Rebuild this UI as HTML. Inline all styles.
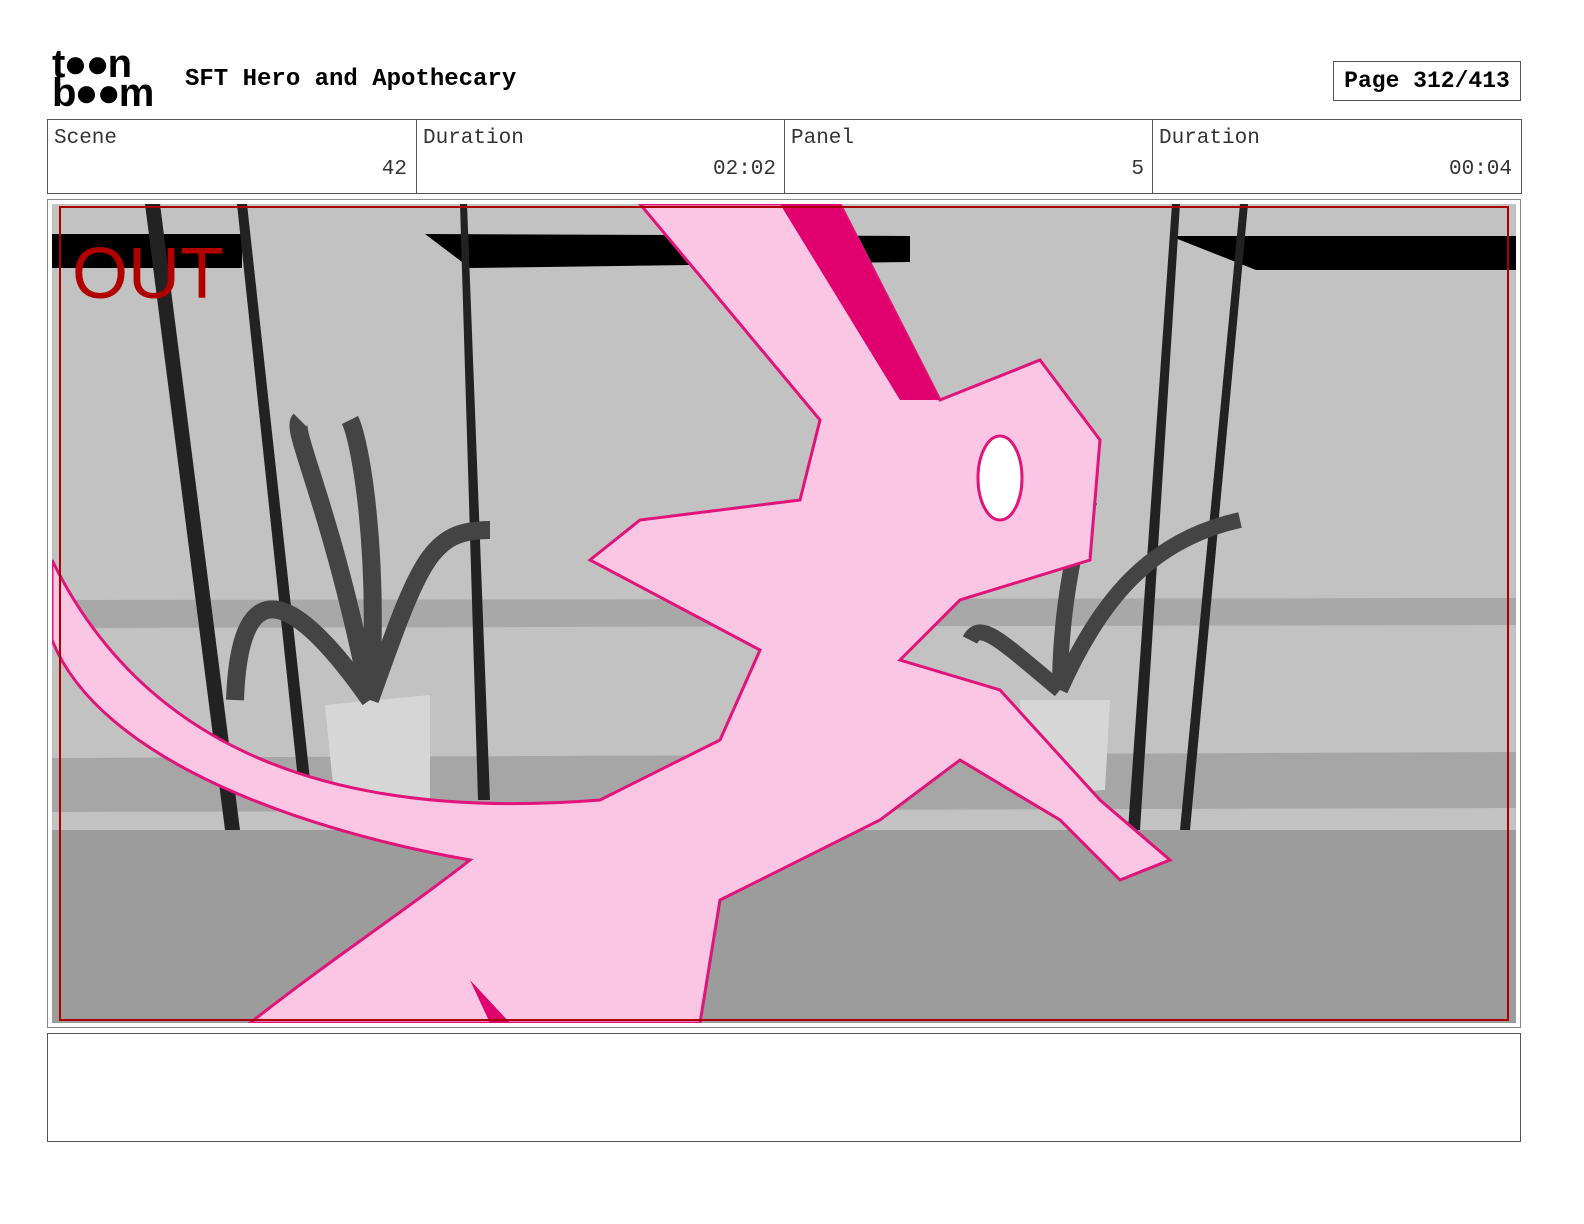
<!DOCTYPE html>
<html style="overflow:hidden"><head><style>
html,body{overflow:hidden}
body{margin:0;background:#fff;width:1584px;height:1224px;position:relative;font-family:"Liberation Mono",monospace}
.a{position:absolute}
.cell{position:absolute;top:120px;height:73px;border-left:1px solid #555;font-size:21px;color:#333}
.cell .l{position:absolute;left:6px;top:7px}
.cell .v{position:absolute;right:8px;top:38px}
</style></head><body>
<div class="a" style="left:52px;top:50px;font-family:'Liberation Sans',sans-serif;font-weight:bold;font-size:40px;line-height:29px;letter-spacing:-2px">t●●n<br>b●●m</div>
<div class="a" style="left:185px;top:66px;font-size:24px;font-weight:bold">SFT Hero and Apothecary</div>
<div class="a" style="left:1333px;top:61px;width:186px;height:38px;border:1px solid #555;font-size:23px;font-weight:bold;text-align:center;line-height:38px">Page 312/413</div>
<div class="a" style="left:47px;top:119px;width:1473px;height:73px;border:1px solid #555"></div>
<div class="cell" style="left:48px;width:367px;border-left:none"><span class="l">Scene</span><span class="v">42</span></div>
<div class="cell" style="left:416px;width:367px"><span class="l">Duration</span><span class="v">02:02</span></div>
<div class="cell" style="left:784px;width:367px"><span class="l">Panel</span><span class="v">5</span></div>
<div class="cell" style="left:1152px;width:367px"><span class="l">Duration</span><span class="v">00:04</span></div>
<div class="a" style="left:47px;top:199px;width:1472px;height:827px;border:1px solid #888"></div>
<svg class="a" style="left:52px;top:204px" width="1464" height="819" viewBox="52 204 1464 819">
<rect x="52" y="204" width="1464" height="819" fill="#c2c2c2"/>
<rect x="52" y="830" width="1464" height="193" fill="#9c9c9c"/>
<polygon points="52,600 1516,598 1516,625 52,628" fill="#a8a8a8"/>
<polygon points="52,758 1516,752 1516,808 52,812" fill="#a6a6a6"/>
<rect x="52" y="234" width="190" height="34" fill="#000"/>
<polygon points="425,234 910,236 910,262 470,268" fill="#000"/>
<polygon points="1170,236 1516,236 1516,270 1256,270" fill="#000"/>
<polygon points="145,204 160,204 240,830 225,830" fill="#222"/>
<polygon points="237,204 247,204 310,780 298,780" fill="#222"/>
<polygon points="460,204 467,204 490,800 478,800" fill="#222"/>
<polygon points="1172,204 1180,204 1140,830 1128,830" fill="#222"/>
<polygon points="1240,204 1248,204 1190,830 1180,830" fill="#222"/>
<polygon points="325,705 430,695 430,800 335,805" fill="#d6d6d6"/>
<polygon points="1020,700 1110,700 1105,790 1025,795" fill="#d6d6d6"/>
<path d="M370,700 C300,600 240,560 235,700 M370,700 C330,500 290,430 300,420 M370,700 C380,550 360,440 350,420 M370,700 C420,560 430,530 490,530" stroke="#444" stroke-width="18" fill="none"/>
<path d="M1060,690 C1100,600 1150,540 1240,520 M1060,690 C1060,600 1080,520 1090,500 M1060,690 C1000,640 980,620 970,640" stroke="#444" stroke-width="16" fill="none"/>
<path d="M52,560 C150,760 350,820 600,800 L720,740 L760,650 L590,560 L640,520 L800,500 L820,420 L640,204 L840,204 L940,400 L1040,360 L1100,440 L1090,560 L960,600 L900,660 L1000,690 L1100,800 L1170,860 L1120,880 L1060,820 L960,760 L880,820 L720,900 L700,1023 L250,1023 C330,960 420,900 470,860 C300,830 100,760 52,640 Z" fill="#fbc6e4" stroke="#e0147a" stroke-width="3"/>
<polygon points="780,204 840,204 940,400 900,400" fill="#e0006e"/>
<polygon points="470,980 490,1023 510,1023" fill="#e0006e"/>
<ellipse cx="1000" cy="478" rx="22" ry="42" fill="#fff" stroke="#e0147a" stroke-width="3"/>
<rect x="60" y="207" width="1448" height="813" fill="none" stroke="#a00" stroke-width="2"/>
<text x="72" y="298" font-family="Liberation Sans" font-size="72" fill="#b00000">OUT</text>
</svg>
<div class="a" style="left:47px;top:1033px;width:1472px;height:107px;border:1px solid #555"></div>
</body></html>
